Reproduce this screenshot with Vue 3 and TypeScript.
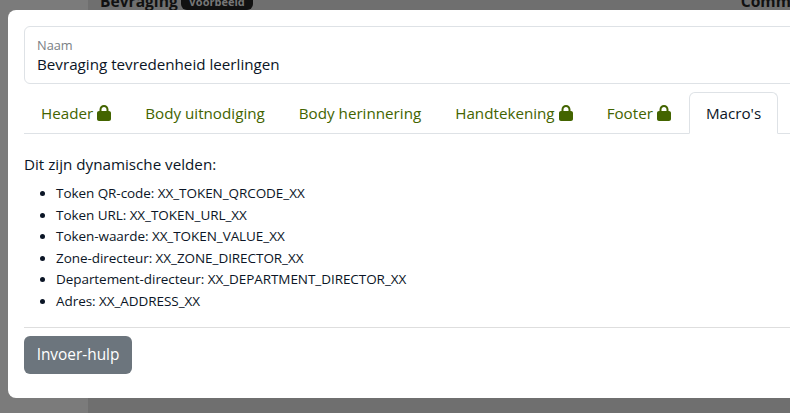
<template>
  <div class="page">
    <aside class="sidebar"></aside>
    <main class="content">
      <div class="head">
        <span class="title">Bevraging</span>
        <span class="badge">Voorbeeld</span>
        <span class="side-title">Communicatie</span>
      </div>
    </main>

    <div class="modal">
      <div class="field">
        <label>Naam</label>
        <div class="value">Bevraging tevredenheid leerlingen</div>
      </div>

      <ul class="tabs">
        <li v-for="t in tabs" :key="t.name" class="tab" :class="{ active: t.active }">
          {{ t.name }}
          <svg v-if="t.locked" class="lock" viewBox="0 0 448 512" aria-hidden="true">
            <path d="M144 144v48H304V144c0-44.2-35.8-80-80-80s-80 35.8-80 80zM80 192V144C80 64.5 144.5 0 224 0s144 64.5 144 144v48h16c35.3 0 64 28.7 64 64V448c0 35.3-28.7 64-64 64H64c-35.3 0-64-28.7-64-64V256c0-35.3 28.7-64 64-64H80z" />
          </svg>
        </li>
      </ul>

      <p class="intro">Dit zijn dynamische velden:</p>
      <ul class="macros">
        <li v-for="m in macros" :key="m">{{ m }}</li>
      </ul>

      <hr />
      <button class="help">Invoer-hulp</button>
    </div>
  </div>
</template>

<script setup lang="ts">
const tabs = [
  { name: 'Header', locked: true },
  { name: 'Body uitnodiging' },
  { name: 'Body herinnering' },
  { name: 'Handtekening', locked: true },
  { name: 'Footer', locked: true },
  { name: "Macro's", active: true }
] as { name: string; locked?: boolean; active?: boolean }[]

const macros = [
  'Token QR-code: XX_TOKEN_QRCODE_XX',
  'Token URL: XX_TOKEN_URL_XX',
  'Token-waarde: XX_TOKEN_VALUE_XX',
  'Zone-directeur: XX_ZONE_DIRECTOR_XX',
  'Departement-directeur: XX_DEPARTMENT_DIRECTOR_XX',
  'Adres: XX_ADDRESS_XX'
]
</script>

<style>
html, body { margin: 0; overflow: hidden; }
</style>

<style scoped>
.page {
  position: relative;
  display: flex;
  width: 790px;
  height: 413px;
  overflow: hidden;
  background: #6f6f6f;
  font-family: "Open Sans", "Noto Sans", sans-serif;
  color: #0b1526;
}

.sidebar {
  flex: 0 0 88px;
  background: #7b7b7b;
}

.content { flex: 1; min-width: 0; }

.head {
  display: flex;
  align-items: center;
  margin-top: -8px;
  padding-left: 12px;
  height: 18px;
  font-size: 15.6px;
  font-weight: 700;
  color: #111;
  white-space: nowrap;
}

.badge {
  margin-left: 3px;
  padding: 1px 8px;
  border-radius: 6px;
  background: #111;
  color: #777;
  font-size: 11px;
}

.side-title { margin-left: 488px; }

.modal {
  position: absolute;
  top: 10px;
  left: 8px;
  width: 900px;
  height: 388px;
  box-sizing: border-box;
  padding: 16px;
  background: #fff;
  border-radius: 8px;
}

.field {
  box-sizing: border-box;
  height: 58px;
  padding: 9px 12px;
  border: 1px solid #dee2e6;
  border-radius: 6px;
}

.field label {
  display: block;
  font-size: 12.8px;
  line-height: 18px;
  color: #7a7f85;
}

.value {
  font-size: 15.2px;
  line-height: 21px;
}

.tabs {
  display: flex;
  margin: 8px 0 0;
  padding: 0;
  list-style: none;
  border-bottom: 1px solid #dee2e6;
}

.tab {
  display: flex;
  align-items: center;
  gap: 4px;
  height: 40px;
  margin-bottom: -1px;
  padding: 0 16px;
  border: 1px solid transparent;
  border-radius: 6px 6px 0 0;
  font-size: 15.2px;
  color: #436400;
}

.tab.active {
  margin-left: 1px;
  color: #0b1526;
  background: #fff;
  border-color: #dee2e6 #dee2e6 #fff;
}

.lock {
  width: 14px;
  height: 16px;
  fill: #436400;
}

.intro {
  margin: 20px 0 0;
  font-size: 15.2px;
  line-height: 20px;
}

.macros {
  margin: 9px 0 0;
  padding-left: 32px;
  font-size: 13.5px;
  line-height: 21.6px;
  letter-spacing: -0.06px;
}

hr {
  margin: 14px 0 8px;
  border: 0;
  border-top: 1px solid #dedede;
}

.help {
  display: block;
  box-sizing: border-box;
  width: 108px;
  height: 38px;
  padding: 0;
  border: 0;
  border-radius: 6px;
  background: #6c757d;
  color: #fff;
  font: inherit;
  font-size: 15.4px;
}
</style>
